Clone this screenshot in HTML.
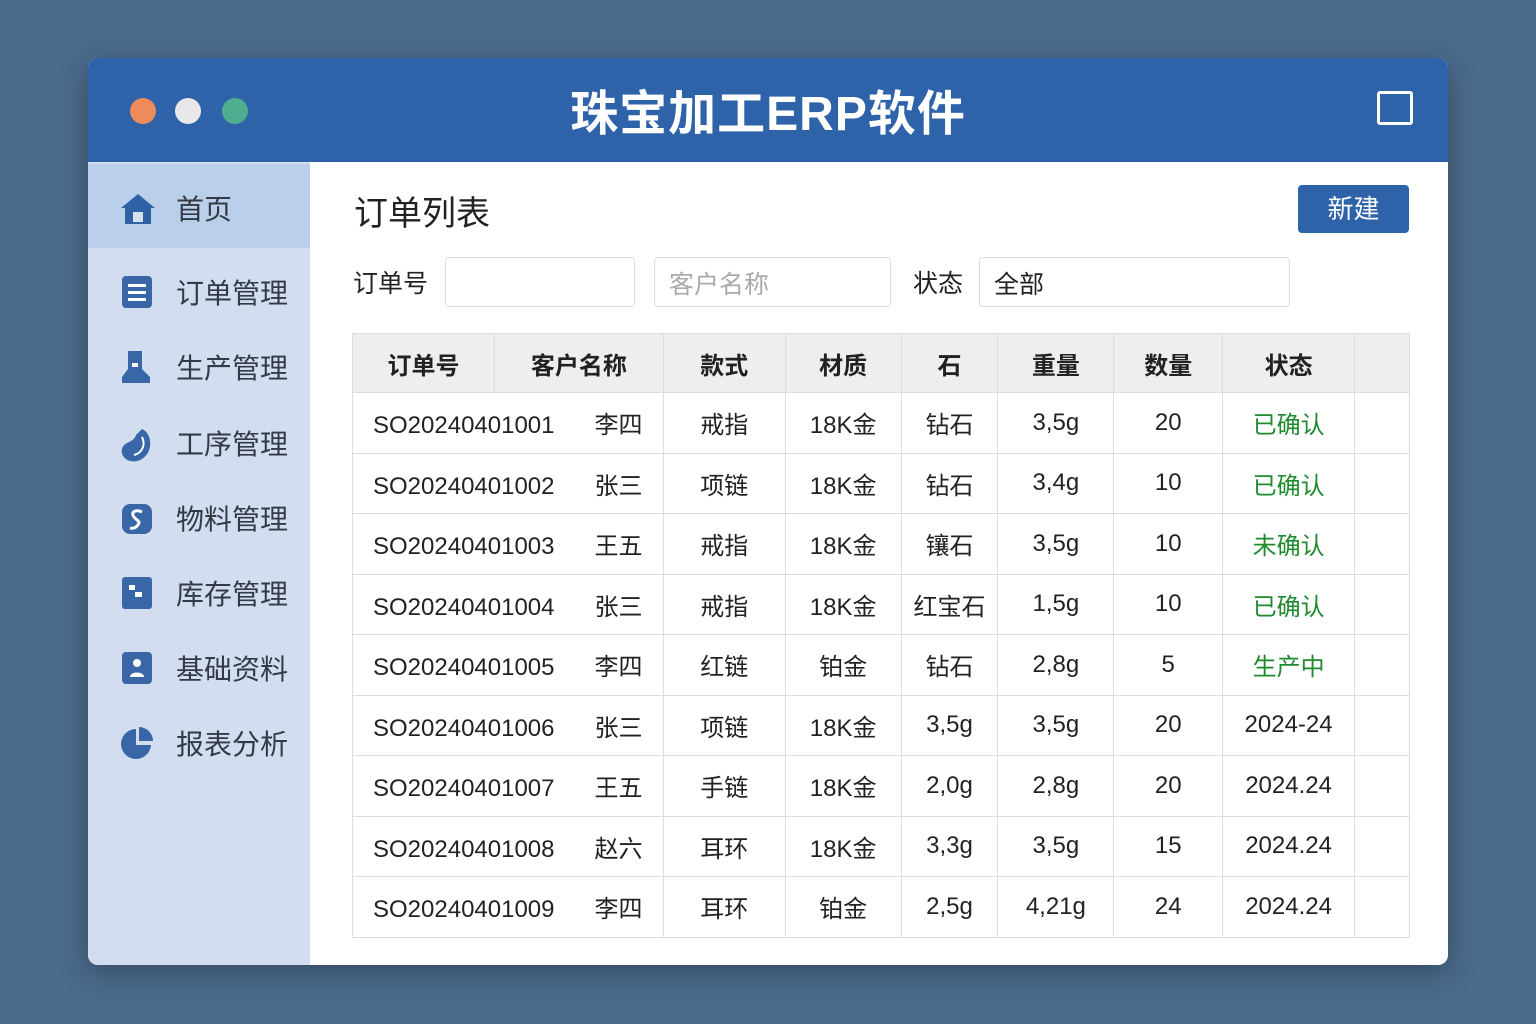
<!DOCTYPE html>
<html><head><meta charset="utf-8"><style>
*{margin:0;padding:0;box-sizing:border-box}
body{width:1536px;height:1024px;background:#4b6b8c;font-family:"Liberation Sans","Noto Sans CJK SC",sans-serif;position:relative;overflow:hidden}
.win{position:absolute;left:88px;top:58px;width:1360px;height:907px;background:#fff;border-radius:10px;overflow:hidden;box-shadow:0 8px 30px rgba(0,0,0,.3)}
.tb{position:absolute;left:0;top:0;width:1360px;height:104px;background:#2e63a9}
.dot{position:absolute;top:40px;width:26px;height:26px;border-radius:50%}
.title{position:absolute;left:0;right:0;top:16px;text-align:center;color:#fff;font-size:48px;font-weight:bold;letter-spacing:1px}
.max{position:absolute;left:1289px;top:33px;width:36px;height:34px;border:3px solid #fff;border-radius:3px}
.side{position:absolute;left:0;top:104px;width:222px;height:803px;background:#d2def0}
.item{position:absolute;left:0;width:222px;height:84px;font-size:28px;color:#333a45}
.item span{position:absolute;left:88px;top:24px}
.item svg{position:absolute;left:32px;top:28px}
.h1{position:absolute;left:354px;top:186px;font-size:34px;color:#222}
.btn{position:absolute;left:1298px;top:185px;width:111px;height:48px;background:#2e63a9;border-radius:4px;color:#fff;font-size:26px;text-align:center;line-height:48px}
.lbl{position:absolute;top:264px;font-size:25px;color:#222}
.inp{position:absolute;top:257px;height:50px;border:1px solid #ddd;border-radius:4px;font-size:25px;padding:7px 14px}
table{position:absolute;left:352px;top:333px;width:1058px;border-collapse:collapse;font-size:24px;color:#222}
td,th{border:1px solid #ddd;text-align:center;height:60.5px;font-weight:normal;vertical-align:middle}
th{background:#eeeeee;font-weight:bold;height:59px}
.g{color:#1f8a2e}
</style></head><body>
<div class="win">
<div class="tb">
<div class="dot" style="left:42px;background:#ee8b5b"></div>
<div class="dot" style="left:87px;background:#e8e8ea"></div>
<div class="dot" style="left:134px;background:#4fae90"></div>
<div class="title">珠宝加工ERP软件</div>
<div class="max"></div>
</div>
<div class="side">
<div class="item" style="top:2px;background:#bad0ea"><svg width="36" height="34" viewBox="0 0 36 34"><path d="M18 2 L35 16 L31 16 L31 32 L5 32 L5 16 L1 16Z" fill="#2f62a5"/><rect x="13" y="20" width="10" height="10" fill="#d5e2f2"/></svg><span>首页</span></div>
<div class="item" style="top:86px"><svg width="32" height="34"><rect x="2" y="0" width="30" height="32" rx="4" fill="#3866a6"/><rect x="8" y="8" width="18" height="3" fill="#fff"/><rect x="8" y="15" width="18" height="3" fill="#fff"/><rect x="8" y="22" width="18" height="3" fill="#fff"/></svg><span>订单管理</span></div>
<div class="item" style="top:161px"><svg width="32" height="34"><path d="M8 0h14v18l8 8v6H2v-6l6-8z" fill="#3866a6"/><rect x="12" y="12" width="6" height="4" fill="#fff"/></svg><span>生产管理</span></div>
<div class="item" style="top:237px"><svg width="34" height="36"><path d="M22 2c10 4 12 22 0 30c-10 6-22 0-20-10c2-8 12-6 14-14z" fill="#3866a6"/><path d="M22 10c4 8 0 16-8 18" stroke="#fff" stroke-width="2" fill="none"/></svg><span>工序管理</span></div>
<div class="item" style="top:312px"><svg width="32" height="34"><rect x="2" y="2" width="30" height="30" rx="8" fill="#3866a6"/><path d="M22 10c-6-3-12 0-8 5s8 4 2 10c-3 2-6 1-6 1" stroke="#fff" stroke-width="3" fill="none"/></svg><span>物料管理</span></div>
<div class="item" style="top:387px"><svg width="32" height="34"><rect x="2" y="0" width="30" height="32" rx="3" fill="#3866a6"/><rect x="9" y="8" width="6" height="5" fill="#fff"/><rect x="15" y="15" width="7" height="5" fill="#fff"/></svg><span>库存管理</span></div>
<div class="item" style="top:462px"><svg width="32" height="34"><rect x="2" y="0" width="30" height="32" rx="4" fill="#3866a6"/><circle cx="17" cy="11" r="4" fill="#fff"/><path d="M10 25c0-6 14-6 14 0z" fill="#fff"/></svg><span>基础资料</span></div>
<div class="item" style="top:537px"><svg width="34" height="34"><path d="M16 2A15 15 0 1 0 31 18H16z" fill="#3866a6"/><path d="M19 0A14 14 0 0 1 33 14H19z" fill="#3866a6"/></svg><span>报表分析</span></div>
</div>
</div>
<div class="h1">订单列表</div>
<div class="btn">新建</div>
<div class="lbl" style="left:353px">订单号</div>
<div class="inp" style="left:445px;width:190px"></div>
<div class="inp" style="left:654px;width:237px;color:#aaa">客户名称</div>
<div class="lbl" style="left:913px">状态</div>
<div class="inp" style="left:979px;width:311px;color:#222">全部</div>
<table>
<colgroup><col style="width:142px"><col style="width:169px"><col style="width:122px"><col style="width:116px"><col style="width:97px"><col style="width:116px"><col style="width:109px"><col style="width:132px"><col style="width:55px"></colgroup>
<tr><th>订单号</th><th>客户名称</th><th>款式</th><th>材质</th><th>石</th><th>重量</th><th>数量</th><th>状态</th><th></th></tr>
<tr><td colspan="2" style="text-align:left;padding-left:20px">SO20240401001&nbsp;&nbsp;&nbsp;&nbsp;&nbsp;&nbsp;李四</td><td>戒指</td><td>18K金</td><td>钻石</td><td>3,5g</td><td>20</td><td class="g">已确认</td><td></td></tr>
<tr><td colspan="2" style="text-align:left;padding-left:20px">SO20240401002&nbsp;&nbsp;&nbsp;&nbsp;&nbsp;&nbsp;张三</td><td>项链</td><td>18K金</td><td>钻石</td><td>3,4g</td><td>10</td><td class="g">已确认</td><td></td></tr>
<tr><td colspan="2" style="text-align:left;padding-left:20px">SO20240401003&nbsp;&nbsp;&nbsp;&nbsp;&nbsp;&nbsp;王五</td><td>戒指</td><td>18K金</td><td>镶石</td><td>3,5g</td><td>10</td><td class="g">未确认</td><td></td></tr>
<tr><td colspan="2" style="text-align:left;padding-left:20px">SO20240401004&nbsp;&nbsp;&nbsp;&nbsp;&nbsp;&nbsp;张三</td><td>戒指</td><td>18K金</td><td>红宝石</td><td>1,5g</td><td>10</td><td class="g">已确认</td><td></td></tr>
<tr><td colspan="2" style="text-align:left;padding-left:20px">SO20240401005&nbsp;&nbsp;&nbsp;&nbsp;&nbsp;&nbsp;李四</td><td>红链</td><td>铂金</td><td>钻石</td><td>2,8g</td><td>5</td><td class="g">生产中</td><td></td></tr>
<tr><td colspan="2" style="text-align:left;padding-left:20px">SO20240401006&nbsp;&nbsp;&nbsp;&nbsp;&nbsp;&nbsp;张三</td><td>项链</td><td>18K金</td><td>3,5g</td><td>3,5g</td><td>20</td><td>2024-24</td><td></td></tr>
<tr><td colspan="2" style="text-align:left;padding-left:20px">SO20240401007&nbsp;&nbsp;&nbsp;&nbsp;&nbsp;&nbsp;王五</td><td>手链</td><td>18K金</td><td>2,0g</td><td>2,8g</td><td>20</td><td>2024.24</td><td></td></tr>
<tr><td colspan="2" style="text-align:left;padding-left:20px">SO20240401008&nbsp;&nbsp;&nbsp;&nbsp;&nbsp;&nbsp;赵六</td><td>耳环</td><td>18K金</td><td>3,3g</td><td>3,5g</td><td>15</td><td>2024.24</td><td></td></tr>
<tr><td colspan="2" style="text-align:left;padding-left:20px">SO20240401009&nbsp;&nbsp;&nbsp;&nbsp;&nbsp;&nbsp;李四</td><td>耳环</td><td>铂金</td><td>2,5g</td><td>4,21g</td><td>24</td><td>2024.24</td><td></td></tr>
</table>
</body></html>
